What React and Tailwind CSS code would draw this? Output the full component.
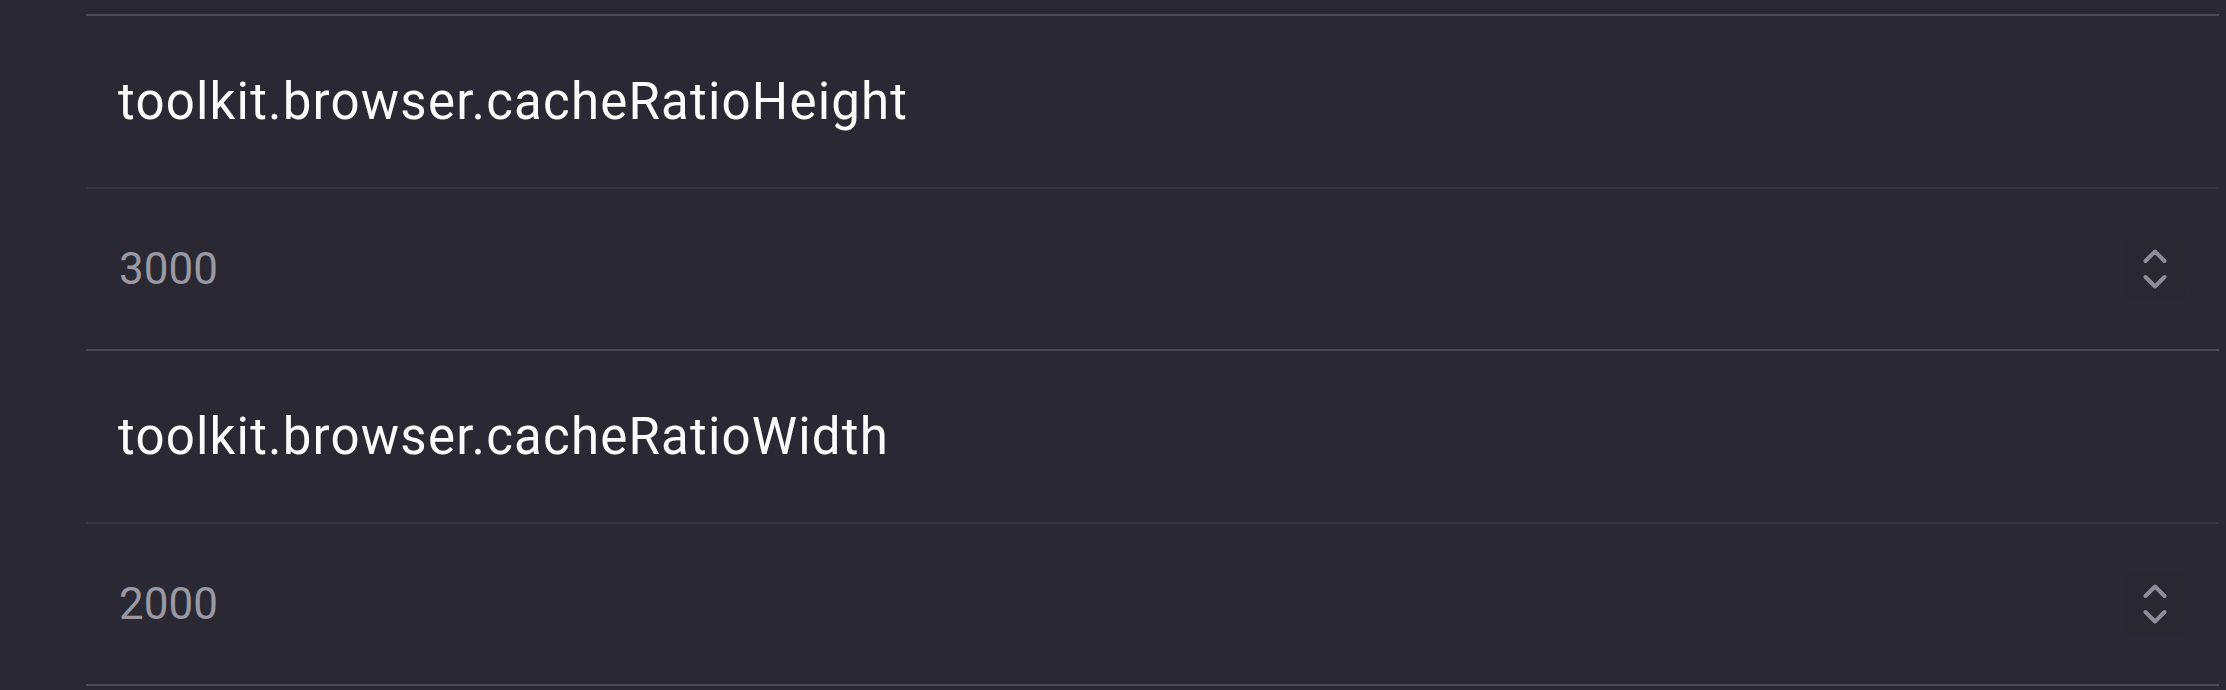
const SETTINGS = [
  { key: 'toolkit.browser.cacheRatioHeight', value: '3000' },
  { key: 'toolkit.browser.cacheRatioWidth', value: '2000' },
];

function Stepper() {
  return (
    <div className="w-[60px] h-[60px] mr-[34px] flex items-center justify-center rounded-md bg-[#292831]">
      <svg width="24" height="40" viewBox="0 0 24 40" fill="none" stroke="#8e8c99" strokeWidth="4" strokeLinecap="round" strokeLinejoin="round">
        <path d="M2.5 12 L12 2.5 L21.5 12" />
        <path d="M2.5 28 L12 37.5 L21.5 28" />
      </svg>
    </div>
  );
}

export default function App() {
  return (
    <div className="min-h-screen bg-[#2a2933] pl-[86px] pr-[7px] pt-[14px]" style={{ fontFamily: 'Roboto, "Noto Sans", sans-serif' }}>
      {SETTINGS.map(s => (
        <div key={s.key}>
          <div className="h-[173px] border-t-2 border-[#4b4a55] flex items-center pl-[32px] text-[51px] tracking-[1.2px] text-[#fbfbfc] leading-none">
            {s.key}
          </div>
          <div className="h-[162px] border-t-2 border-[#35343e] flex items-center justify-between pl-[33px]">
            <span className="text-[44px] leading-none text-[#9998a3]">{s.value}</span>
            <Stepper />
          </div>
        </div>
      ))}
      <div className="border-t-2 border-[#4b4a55]" />
    </div>
  );
}
